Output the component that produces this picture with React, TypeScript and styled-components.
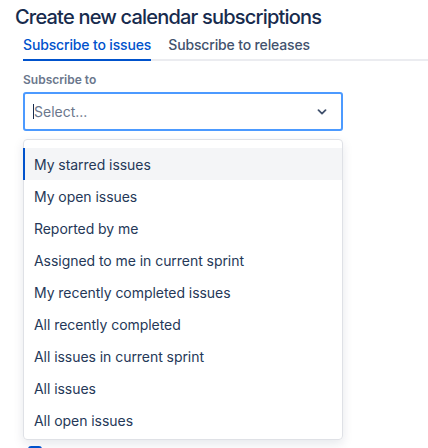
import React from "react";
import styled, { createGlobalStyle } from "styled-components";

const Global = createGlobalStyle`
  html, body { margin: 0; padding: 0; background: #ffffff; }
  body { font-family: Inter, "Noto Sans", sans-serif; color: #172B4D; -webkit-font-smoothing: antialiased; }
  * { box-sizing: border-box; }
`;

const Page = styled.div`
  height: 448px;
  overflow: hidden;
  padding: 5px 0 0 15px;
  display: flex;
  flex-direction: column;
`;

const Title = styled.h1`
  margin: 0;
  font-size: 20px;
  line-height: 24px;
  font-weight: 500;
  color: #172B4D;
  letter-spacing: -0.8px;
`;

const Body = styled.div`
  padding-left: 8px;
  display: flex;
  flex-direction: column;
`;

const TabList = styled.div`
  margin-top: 6px;
  display: flex;
  gap: 17px;
  border-bottom: 2px solid #EBECF0;
`;

const Tab = styled.div<{ $active?: boolean }>`
  font-size: 14px;
  line-height: 20px;
  font-weight: 500;
  letter-spacing: -0.15px;
  padding-bottom: 4px;
  margin-bottom: -2px;
  color: ${(p) => (p.$active ? "#0052CC" : "#42526E")};
  border-bottom: 2px solid ${(p) => (p.$active ? "#0052CC" : "transparent")};
`;

const Label = styled.label`
  margin-top: 11px;
  font-size: 12px;
  line-height: 16px;
  font-weight: 600;
  color: #6B778C;
`;

const SelectBox = styled.div`
  margin-top: 4px;
  width: 320px;
  height: 39px;
  border: 2px solid #4C9AFF;
  border-radius: 3px;
  display: flex;
  align-items: center;
  padding: 0 14px 0 8px;
`;

const Caret = styled.span`
  width: 1px;
  height: 15px;
  background: #172B4D;
`;

const Placeholder = styled.span`
  flex: 1;
  font-size: 14px;
  color: #6B778C;
`;

const Menu = styled.div`
  margin-top: 8px;
  width: 320px;
  border: 1px solid #DFE1E6;
  border-radius: 4px;
  box-shadow: 0 4px 11px rgba(9, 30, 66, 0.1);
  padding: 8px 0 3px;
  display: flex;
  flex-direction: column;
`;

const Option = styled.div<{ $focused?: boolean }>`
  height: 32px;
  display: flex;
  align-items: center;
  padding-left: 11px;
  font-size: 14px;
  letter-spacing: -0.05px;
  color: #253858;
  background: ${(p) => (p.$focused ? "#F4F5F7" : "transparent")};
  box-shadow: ${(p) => (p.$focused ? "inset 2px 0 0 #0052CC" : "none")};
  margin-left: -1px;
`;

const CheckRow = styled.div`
  margin-top: 6px;
  padding-left: 5px;
  display: flex;
  align-items: flex-start;
  gap: 10px;
`;

const Check = styled.span`
  width: 14px;
  height: 14px;
  border-radius: 3px;
  background: #0052CC;
  flex: none;
`;

const CheckText = styled.span`
  font-size: 14px;
  line-height: 16px;
  color: #97A0AF;
`;

const options = [
  "My starred issues",
  "My open issues",
  "Reported by me",
  "Assigned to me in current sprint",
  "My recently completed issues",
  "All recently completed",
  "All issues in current sprint",
  "All issues",
  "All open issues",
];

export default function App() {
  return (
    <>
      <Global />
      <Page>
        <Title>Create new calendar subscriptions</Title>
        <Body>
          <TabList>
            <Tab $active>Subscribe to issues</Tab>
            <Tab>Subscribe to releases</Tab>
          </TabList>
          <Label>Subscribe to</Label>
          <SelectBox>
            <Caret />
            <Placeholder>Select...</Placeholder>
            <svg width="10" height="6" viewBox="0 0 10 6" aria-hidden="true">
              <path d="M1.5 1.2 L5 4.6 L8.5 1.2" fill="none" stroke="#42526E" strokeWidth="1.8" strokeLinecap="round" strokeLinejoin="round" />
            </svg>
          </SelectBox>
          <Menu>
            {options.map((o, i) => (
              <Option key={o} $focused={i === 0}>{o}</Option>
            ))}
          </Menu>
          <CheckRow>
            <Check />
            <CheckText>Include issues that have no due date set</CheckText>
          </CheckRow>
        </Body>
      </Page>
    </>
  );
}
